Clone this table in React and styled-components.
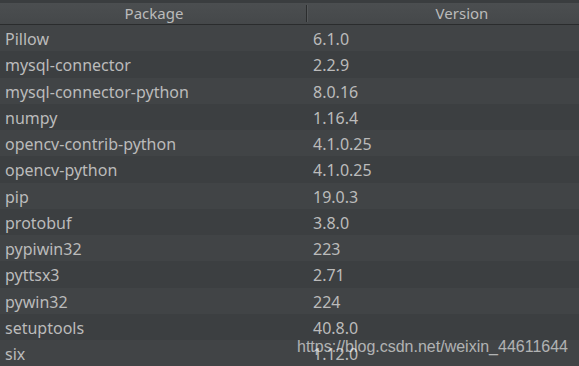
import React from "react";
import styled, { createGlobalStyle } from "styled-components";

const Global = createGlobalStyle`
  html, body { margin: 0; padding: 0; background: #3c3f41; overflow: hidden; }
  #root { width: 579px; height: 366px; overflow: hidden; position: relative; }
`;

const Table = styled.div`
  width: 616px;
  font-family: "Noto Sans", "Open Sans", sans-serif;
  font-size: 16px;
  color: #bbbbbb;
  padding-top: 3px;
  background: #3a3d3f;
  box-sizing: border-box;
`;

const Header = styled.div`
  display: grid;
  grid-template-columns: 308px 1fr;
  height: 21px;
  background: linear-gradient(#4b4e50, #45484a);
  border-bottom: 1px solid #2a2c2d;
`;

const HeadCell = styled.div`
  display: flex;
  align-items: center;
  justify-content: center;
  line-height: 21px;
  font-size: 15px;
  position: relative;
  ${(p) =>
    p.$sep &&
    `&::after{content:"";position:absolute;right:1px;top:2px;bottom:2px;width:1px;background:#2b2d2e;box-shadow:1px 0 0 #55585a;}`}
`;

const Row = styled.div`
  display: grid;
  grid-template-columns: 308px 1fr;
  height: 26.25px;
  align-items: center;
  background: ${(p) => (p.$alt ? "#414446" : "#3c3f41")};
`;

const Cell = styled.div`
  padding: 2px 0 0 5px;
  white-space: nowrap;
`;

const Watermark = styled.div`
  position: absolute;
  left: 297px;
  top: 338px;
  font-family: "Liberation Sans", Arial, sans-serif;
  font-size: 16px;
  color: rgba(255, 255, 255, 0.6);
  white-space: nowrap;
`;

const data = [
  ["Pillow", "6.1.0"],
  ["mysql-connector", "2.2.9"],
  ["mysql-connector-python", "8.0.16"],
  ["numpy", "1.16.4"],
  ["opencv-contrib-python", "4.1.0.25"],
  ["opencv-python", "4.1.0.25"],
  ["pip", "19.0.3"],
  ["protobuf", "3.8.0"],
  ["pypiwin32", "223"],
  ["pyttsx3", "2.71"],
  ["pywin32", "224"],
  ["setuptools", "40.8.0"],
  ["six", "1.12.0"],
];

export default function App() {
  return (
    <>
      <Global />
      <Table>
        <Header>
          <HeadCell $sep>Package</HeadCell>
          <HeadCell>Version</HeadCell>
        </Header>
        {data.map(([n, v], i) => (
          <Row key={n} $alt={i % 2 === 0}>
            <Cell>{n}</Cell>
            <Cell>{v}</Cell>
          </Row>
        ))}
      </Table>
      <Watermark>https://blog.csdn.net/weixin_44611644</Watermark>
    </>
  );
}
